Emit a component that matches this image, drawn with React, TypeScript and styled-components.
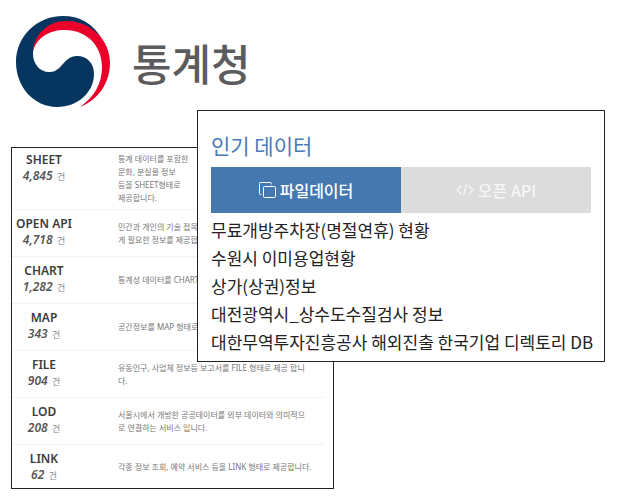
import React from "react";
import styled, { createGlobalStyle } from "styled-components";

const GlobalStyle = createGlobalStyle`
  * { box-sizing: border-box; }
  body {
    margin: 0;
    background: #fff;
    font-family: "Noto Sans CJK KR", "Noto Sans", sans-serif;
  }
`;

const Page = styled.main`
  padding: 16px 24px 16px 11px;
`;

const Brand = styled.header`
  display: flex;
  align-items: center;
  gap: 20px;
  height: 92px;
  padding-left: 5px;
`;

const BrandName = styled.h1`
  margin: 0;
  font-size: 43px;
  line-height: 48px;
  font-weight: 500;
  color: #5c5c5e;
`;

const Board = styled.div`
  position: relative;
  padding-top: 39px;
`;

const CatalogCard = styled.section`
  width: 54%;
  min-width: 322px;
  border: 1px solid #222;
  padding-right: 9px;
`;

const Catalog = styled.table`
  width: 100%;
  border-collapse: collapse;
`;

const CatalogRow = styled.tr<{ $height: number }>`
  height: ${(p) => p.$height}px;
  & + & { border-top: 1px solid #f3f3f3; }
`;

const Kind = styled.th<{ $top: number }>`
  width: 106px;
  padding: ${(p) => p.$top}px 42px 0 0;
  vertical-align: top;
  text-align: center;
  white-space: nowrap;
  font: 600 12px/16px "Noto Sans", "Noto Sans CJK KR", sans-serif;
  color: #3c3c3c;
`;

const Count = styled.div`
  font-weight: 400;
  font-size: 9px;
  color: #888;

  em {
    margin-right: 2px;
    font-size: 12px;
    font-weight: 600;
    color: #555;
  }
`;

const Description = styled.td`
  padding: 0;
  vertical-align: middle;
  font: 400 8px/13px "Noto Sans", "Noto Sans CJK KR", sans-serif;
  color: #777;
  white-space: pre-line;
`;

const PopularPanel = styled.section`
  position: absolute;
  top: 2px;
  left: 186px;
  right: 4px;
  padding: 18px 13px 5px;
  border: 1px solid #222;
  background: #fff;
`;

const PanelTitle = styled.h2`
  margin: 0 0 6px;
  font-size: 21px;
  line-height: 32px;
  font-weight: 400;
  color: #4a7ab5;
`;

const Tabs = styled.div`
  display: flex;
`;

const Tab = styled.button<{ $active?: boolean }>`
  flex: 1;
  display: flex;
  align-items: center;
  justify-content: center;
  gap: 4px;
  height: 46px;
  padding: 0;
  border: 0;
  font: 500 16px/24px "Noto Sans CJK KR", sans-serif;
  color: ${(p) => (p.$active ? "#fff" : "#f6f6f6")};
  background: ${(p) => (p.$active ? "#4678b0" : "#dcdcdc")};
`;

const DataList = styled.ul`
  list-style: none;
  margin: 3px 0 0;
  padding: 0;
`;

const DataItem = styled.li`
  font-size: 17px;
  line-height: 28px;
  color: #222;
  white-space: nowrap;
`;

const Emblem = () => (
  <svg width="96" height="92" viewBox="16 16 96 92" aria-hidden="true">
    <path
      fill="#063660"
      d="M102 39C93 23 79 16 63 16C36 16 16 37 16 62C16 87 34 107 57 107C78 107 94 92 94 74C94 63 87 56 77 56C69 56 65 62 61 66C57 71 53 72 49 72C40 72 33 64 33 54C33 38 47 25 66 25C82 25 94 31 102 39Z"
    />
    <path
      fill="#ea0029"
      d="M33 52C34 34 48 21 66 21C91 21 110 40 110 63C110 83 98 100 80 107C94 97 102 84 102 67C102 45 86 30 65 30C49 30 36 38 33 52Z"
    />
  </svg>
);

const CopyIcon = () => (
  <svg width="17" height="17" viewBox="0 0 17 17" fill="none" stroke="currentColor" aria-hidden="true">
    <rect x="4.5" y="4.5" width="12" height="11" rx="1" />
    <path d="M2.5 12.5H1.5Q.5 12.5 .5 11.5V1.5Q.5 .5 1.5 .5H11.5Q12.5 .5 12.5 1.5V2.5" />
  </svg>
);

const CodeIcon = () => (
  <svg width="18" height="12" viewBox="0 0 18 12" fill="none" stroke="currentColor" strokeWidth="1.3" aria-hidden="true">
    <path d="M5.5 1.5L1 6L5.5 10.5M12.5 1.5L17 6L12.5 10.5M10.5 .5L7.5 11.5" />
  </svg>
);

const catalog = [
  { kind: "SHEET", count: "4,845", text: "통계 데이터를 포함한\n문화, 분실물 정보\n등을 SHEET형태로\n제공합니다.", height: 61, top: 4 },
  { kind: "OPEN API", count: "4,718", text: "민간과 개인의 기술 접목\n게 필요한 정보를 제공합" },
  { kind: "CHART", count: "1,282", text: "통계성 데이터를 CHART" },
  { kind: "MAP", count: "343", text: "공간정보를 MAP 형태로" },
  { kind: "FILE", count: "904", text: "유동인구, 사업체 정보등 보고서를 FILE 형태로 제공 합니\n다." },
  { kind: "LOD", count: "208", text: "서울시에서 개방한 공공데이터를 외부 데이터와 의미적으\n로 연결하는 서비스 입니다." },
  { kind: "LINK", count: "62", text: "각종 정보 조회, 예약 서비스 등을 LINK 형태로 제공합니다.", height: 44 },
];

const popular = [
  "무료개방주차장(명절연휴) 현황",
  "수원시 이미용업현황",
  "상가(상권)정보",
  "대전광역시_상수도수질검사 정보",
  "대한무역투자진흥공사 해외진출 한국기업 디렉토리 DB",
];

export default function App() {
  return (
    <>
      <GlobalStyle />
      <Page>
        <Brand>
          <Emblem />
          <BrandName>통계청</BrandName>
        </Brand>
        <Board>
          <CatalogCard>
            <Catalog>
              <tbody>
                {catalog.map((row) => (
                  <CatalogRow key={row.kind} $height={row.height ?? 47}>
                    <Kind scope="row" $top={row.top ?? 6}>
                      {row.kind}
                      <Count>
                        <em>{row.count}</em> 건
                      </Count>
                    </Kind>
                    <Description>{row.text}</Description>
                  </CatalogRow>
                ))}
              </tbody>
            </Catalog>
          </CatalogCard>
          <PopularPanel>
            <PanelTitle>인기 데이터</PanelTitle>
            <Tabs role="tablist">
              <Tab type="button" role="tab" aria-selected="true" $active>
                <CopyIcon />
                파일데이터
              </Tab>
              <Tab type="button" role="tab" aria-selected="false">
                <CodeIcon />
                오픈 API
              </Tab>
            </Tabs>
            <DataList>
              {popular.map((name) => (
                <DataItem key={name}>{name}</DataItem>
              ))}
            </DataList>
          </PopularPanel>
        </Board>
      </Page>
    </>
  );
}
